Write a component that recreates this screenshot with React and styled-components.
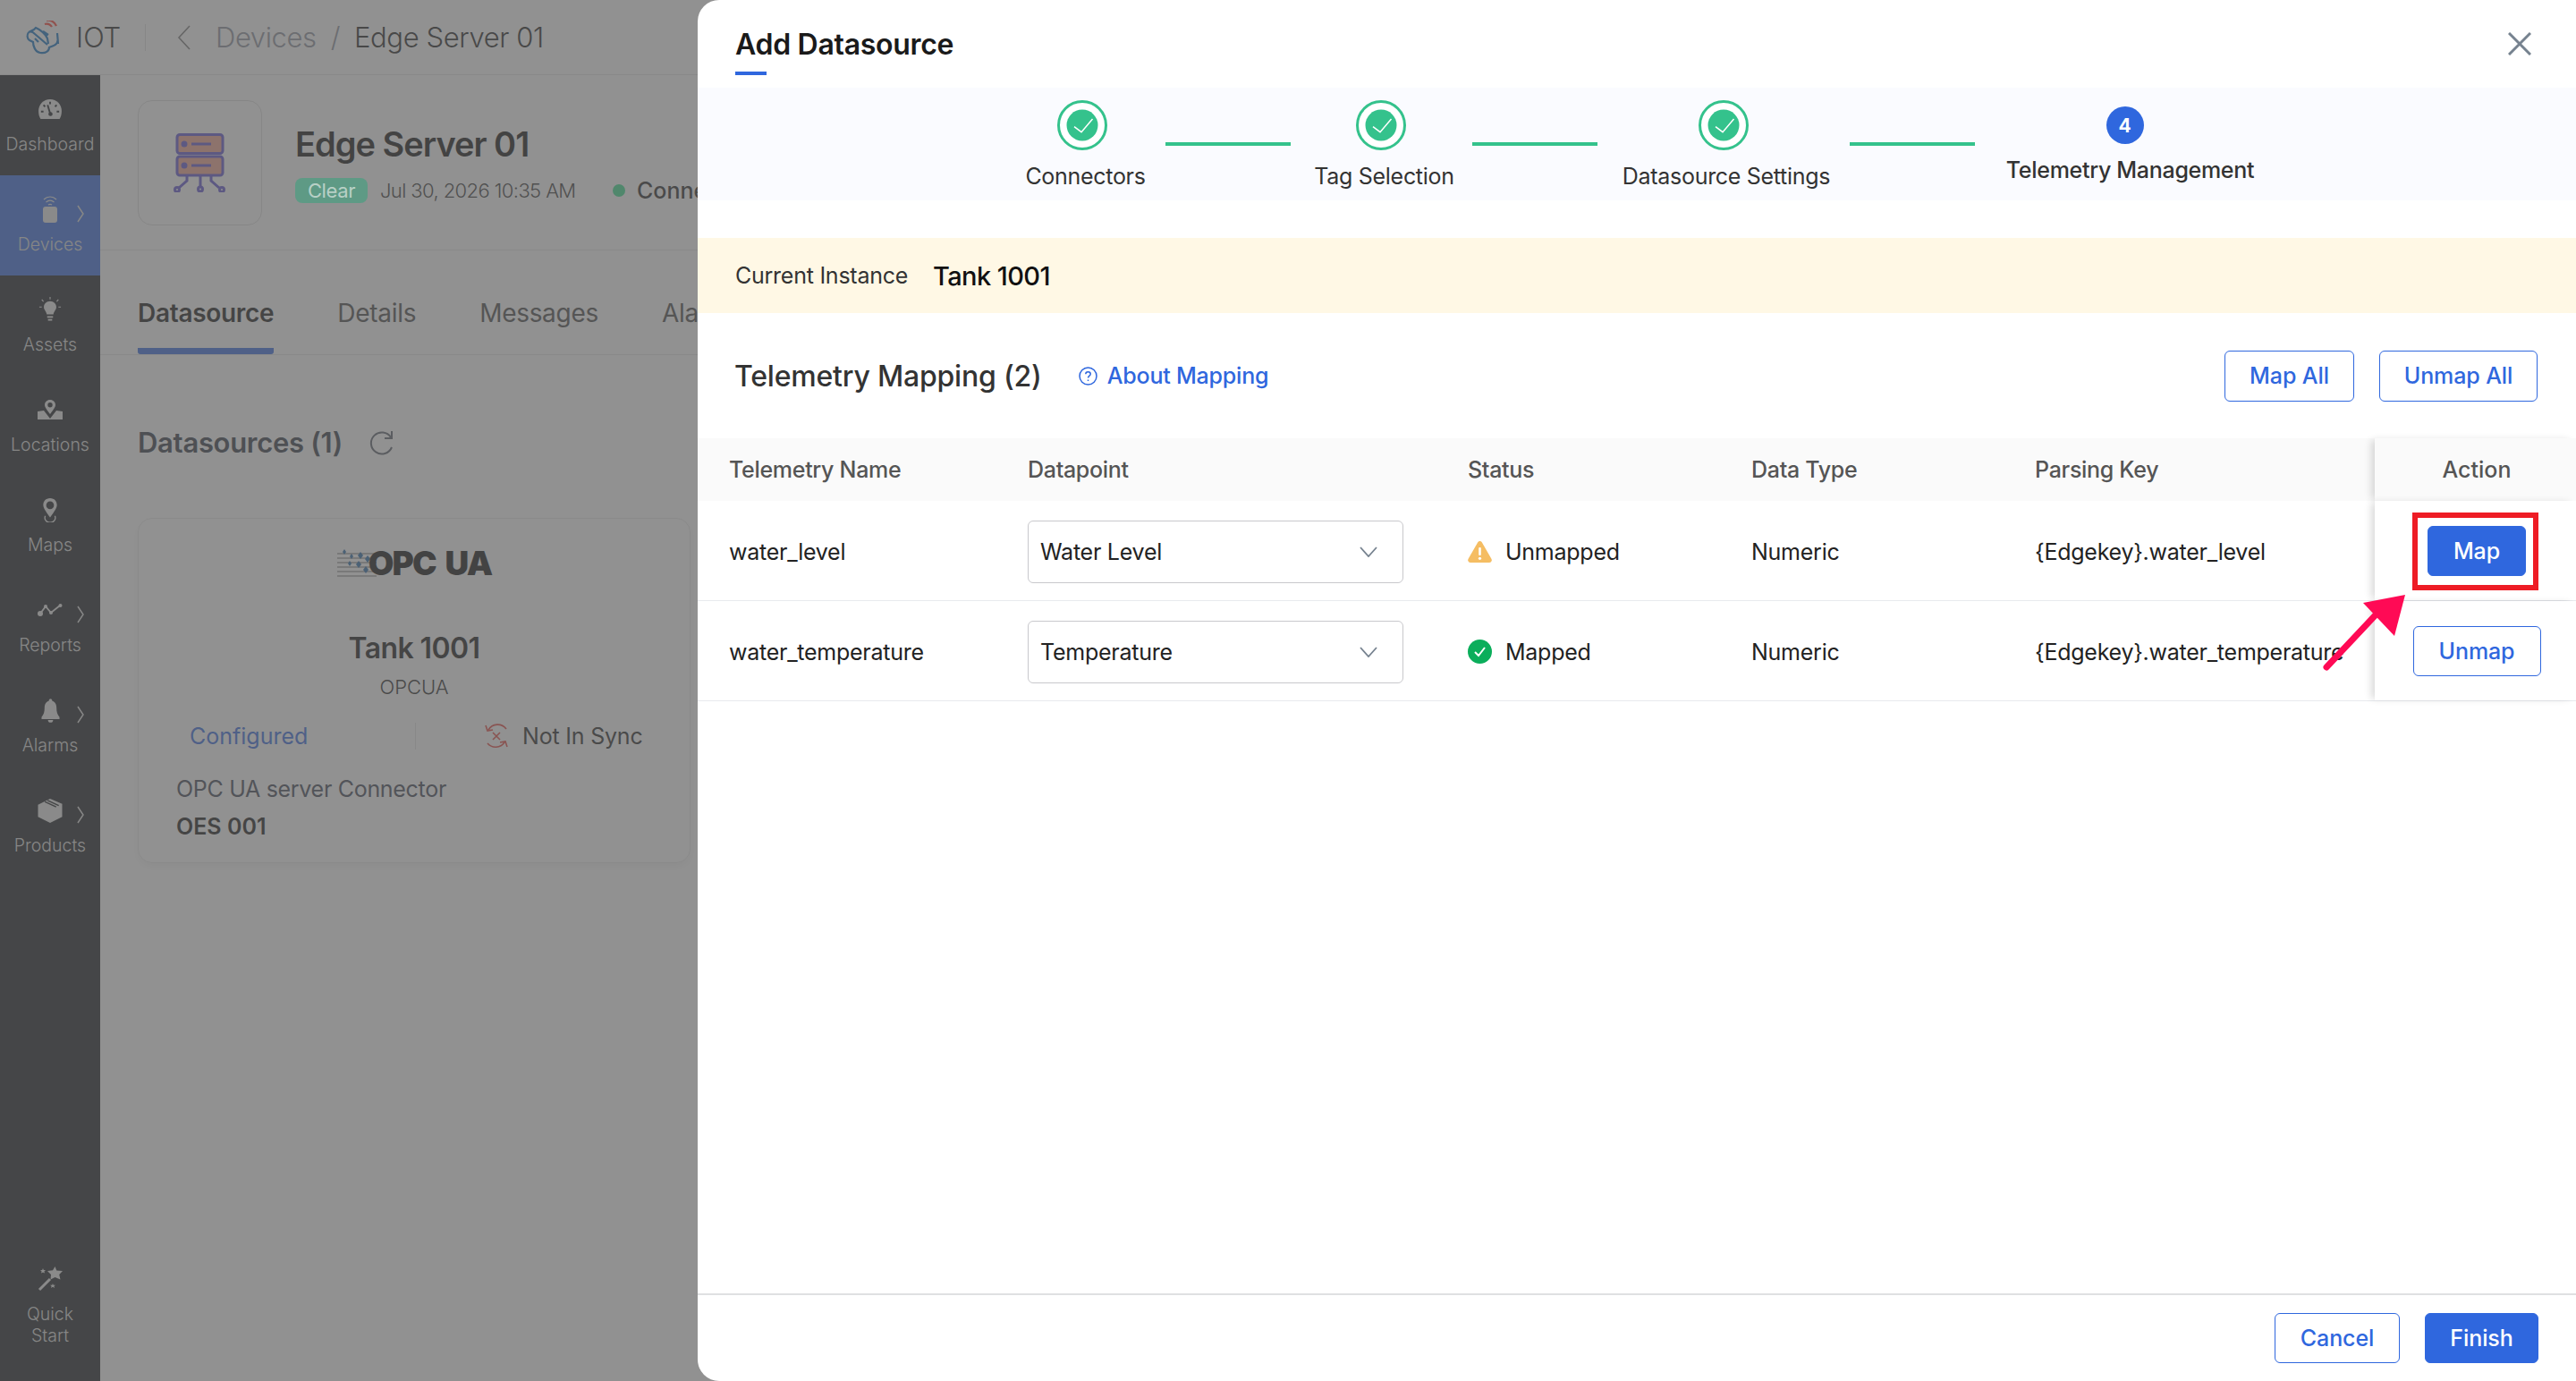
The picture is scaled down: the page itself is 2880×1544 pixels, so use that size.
import styled, { createGlobalStyle } from "styled-components";

const FONT = "Inter, 'Noto Sans', sans-serif";
const BLUE = "#2f67de";
const GREEN = "#34c28c";

const GlobalStyle = createGlobalStyle`
* {
  margin: 0;
  padding: 0;
  box-sizing: border-box;
  font-family: ${FONT};
}
html, body {
  width: 2880px;
  height: 1544px;
  overflow: hidden;
  background: #fff;
}
`;

const Shell = styled.div`
  position: relative;
  width: 2880px;
  height: 1544px;
  overflow: hidden;
  display: flex;
  flex-direction: column;
  background: #fff;
`;

const Backdrop = styled.div`
  position: absolute;
  inset: 0;
  background: rgba(94, 94, 94, 0.683);
`;

/* top bar */
const TopBar = styled.header`
  height: 84px;
  flex-shrink: 0;
  display: flex;
  align-items: center;
  padding-left: 28px;
  border-bottom: 1px solid #e6e6e6;
`;

const Product = styled.span`
  margin-left: 15px;
  width: 77px;
  font-size: 31px;
  font-weight: 300;
  color: #222;
`;

const BarDivider = styled.span`
  width: 1px;
  height: 30px;
  background: #ddd;
`;

const BackIcon = styled.svg`
  margin-left: 35px;
`;

const Crumb = styled.span`
  font-size: 31px;
  font-weight: 300;
  letter-spacing: -0.4px;
  color: ${({ $current }) => ($current ? "#1c1c1c" : "#8a8f9a")};
  margin: ${({ $margin }) => $margin || "0"};
`;

/* sidebar */
const Body = styled.div`
  flex: 1;
  display: flex;
  min-height: 0;
`;

const Sidebar = styled.nav`
  width: 112px;
  flex-shrink: 0;
  display: flex;
  flex-direction: column;
  background: #111519;
`;

const NavItem = styled.div`
  position: relative;
  height: 112px;
  flex-shrink: 0;
  display: flex;
  flex-direction: column;
  align-items: center;
  padding-top: 20px;
  background: ${({ $active }) => ($active ? BLUE : "transparent")};
`;

const NavIcon = styled.div`
  height: 36px;
  display: flex;
  align-items: center;
  justify-content: center;
`;

const NavChevron = styled.svg`
  position: absolute;
  left: 85px;
  top: 33px;
`;

const NavLabel = styled.span`
  margin-top: 9px;
  font-size: 19.5px;
  line-height: 24px;
  font-weight: 300;
  text-align: center;
  color: #dcdcdc;
`;

const QuickStart = styled(NavItem)`
  height: auto;
  margin-top: auto;
  padding-bottom: 39px;
`;

/* page behind the dialog */
const Content = styled.main`
  flex: 1;
  min-width: 0;
`;

const DeviceHead = styled.section`
  height: 196px;
  display: flex;
  gap: 37px;
  padding: 28px 0 0 42px;
  border-bottom: 1px solid #e6e6e6;
`;

const DeviceThumb = styled.div`
  width: 139px;
  height: 140px;
  display: flex;
  align-items: center;
  justify-content: center;
  border: 1px solid #dcdcdc;
  border-radius: 16px;
`;

const DeviceInfo = styled.div`
  display: flex;
  flex-direction: column;
`;

const DeviceTitle = styled.h1`
  margin-top: 25px;
  font-size: 38px;
  line-height: 48px;
  font-weight: 600;
  letter-spacing: -1px;
  color: #0c0c0c;
`;

const MetaRow = styled.div`
  margin-top: 14px;
  display: flex;
  align-items: center;
  height: 28px;
  white-space: nowrap;
`;

/* sits over the backdrop: its text is lighter than the dimmed page allows */
const ClearBadge = styled.span`
  position: relative;
  z-index: 1;
  width: 81px;
  height: 28px;
  border-radius: 8px;
  display: flex;
  align-items: center;
  justify-content: center;
  background: #5e9a85;
  color: #b8d0c6;
  font-size: 22px;
  letter-spacing: -0.4px;
`;

const MetaDate = styled.span`
  margin-left: 14px;
  width: 260px;
  font-size: 22px;
  font-weight: 300;
  letter-spacing: -0.6px;
  color: #333;
`;

const MetaDot = styled.span`
  width: 14px;
  height: 14px;
  border-radius: 50%;
  background: #34e08c;
`;

const MetaState = styled.span`
  margin-left: 13px;
  font-size: 25px;
  font-weight: 500;
  color: #222;
`;

const Tabs = styled.div`
  height: 117px;
  display: flex;
  align-items: flex-end;
  gap: 71px;
  padding-left: 42px;
  border-bottom: 1px solid #e6e6e6;
`;

const Tab = styled.span`
  padding-bottom: 22px;
  font-size: 28px;
  line-height: 34px;
  font-weight: ${({ $active }) => ($active ? 600 : 400)};
  letter-spacing: -0.3px;
  color: ${({ $active }) => ($active ? "#111" : "#444")};
  border-bottom: 7px solid ${({ $active }) => ($active ? BLUE : "transparent")};
  border-radius: 0 0 3px 3px;
`;

const Panel = styled.section`
  padding: 78px 0 0 42px;
`;

const PanelHead = styled.div`
  display: flex;
  align-items: center;
  gap: 30px;
`;

const PanelTitle = styled.h2`
  font-size: 31px;
  line-height: 40px;
  font-weight: 600;
  letter-spacing: -0.3px;
  color: #2d3340;
`;

const SourceCard = styled.article`
  margin-top: 64px;
  width: 618px;
  height: 386px;
  padding-top: 33px;
  display: flex;
  flex-direction: column;
  border: 1px solid #e8e8e8;
  border-radius: 16px;
  box-shadow: 0 4px 10px rgba(0, 0, 0, 0.06);
`;

const OpcLogo = styled.div`
  height: 33px;
  display: flex;
  align-items: center;
  justify-content: center;
`;

const OpcWord = styled.span`
  margin-left: -9px;
  font-size: 37px;
  line-height: 33px;
  font-weight: 900;
  letter-spacing: -1.8px;
  word-spacing: 5px;
  color: #0a0a0a;
`;

const SourceName = styled.h3`
  margin-top: 59px;
  text-align: center;
  font-size: 32px;
  line-height: 40px;
  font-weight: 600;
  letter-spacing: -0.6px;
  color: #111;
`;

const SourceType = styled.p`
  margin-top: 8px;
  text-align: center;
  font-size: 22px;
  line-height: 30px;
  font-weight: 300;
  color: #222;
`;

const SourceStates = styled.div`
  margin-top: 25px;
  display: grid;
  grid-template-columns: 309px 1fr;
  height: 30px;
  font-size: 25px;
  line-height: 30px;
`;

const StateConfigured = styled.span`
  padding-left: 57px;
  color: ${BLUE};
`;

const StateSync = styled.span`
  display: flex;
  align-items: center;
  gap: 15px;
  padding-left: 76px;
  letter-spacing: -0.2px;
  color: #222;
  border-left: 1px solid #e2e2e2;
`;

const SourceDesc = styled.p`
  margin-top: 29px;
  padding-left: 42px;
  font-size: 25px;
  line-height: 30px;
  letter-spacing: -0.3px;
  color: #3a4150;
`;

const SourceCode = styled.p`
  margin-top: 12px;
  padding-left: 42px;
  font-size: 25px;
  line-height: 30px;
  font-weight: 600;
  color: #111;
`;

/* dialog */
const Modal = styled.aside`
  position: absolute;
  top: 0;
  right: 0;
  bottom: 0;
  width: 2100px;
  display: flex;
  flex-direction: column;
  background: #fff;
  border-radius: 24px 0 0 24px;
  overflow: hidden;
`;

const ModalHead = styled.div`
  height: 98px;
  flex-shrink: 0;
  display: flex;
  justify-content: space-between;
  padding: 30px 50px 0 42px;
`;

const ModalTitle = styled.h2`
  font-size: 32px;
  line-height: 40px;
  font-weight: 600;
  letter-spacing: -0.3px;
  color: #1a1a1a;
`;

const TitleMark = styled.div`
  margin-top: 10px;
  width: 35px;
  height: 4px;
  background: ${BLUE};
`;

const CloseIcon = styled.svg`
  margin-top: 6px;
`;

const Stepper = styled.div`
  height: 126px;
  flex-shrink: 0;
  display: flex;
  padding-left: 366px;
  background: #fafbff;
`;

const Step = styled.div`
  width: ${({ $w }) => $w}px;
  display: flex;
  flex-direction: column;
  align-items: center;
  padding-top: ${({ $current }) => ($current ? "21px" : "14px")};
`;

const StepBadge = styled.div`
  margin-right: ${({ $current }) => ($current ? "12px" : "7px")};
  height: ${({ $current }) => ($current ? "42px" : "56px")};
`;

const StepNumber = styled.span`
  width: 42px;
  height: 42px;
  display: flex;
  align-items: center;
  justify-content: center;
  border-radius: 50%;
  background: ${BLUE};
  color: #fff;
  font-size: 21px;
  font-weight: 700;
`;

const StepLabel = styled.span`
  margin-top: 14px;
  font-size: 25px;
  line-height: 30px;
  font-weight: ${({ $current }) => ($current ? 500 : 400)};
  letter-spacing: -0.3px;
  color: #333;
  white-space: nowrap;
`;

const StepLine = styled.div`
  width: 140px;
  height: 4px;
  margin: 61px ${({ $last }) => ($last ? "35px" : "28px")} 0 22px;
  background: ${GREEN};
`;

const InstanceBar = styled.div`
  margin-top: 42px;
  height: 84px;
  flex-shrink: 0;
  display: flex;
  align-items: center;
  gap: 28px;
  padding-left: 42px;
  background: #fff8e5;
`;

const InstanceLabel = styled.span`
  font-size: 25px;
  letter-spacing: -0.25px;
  color: #333;
`;

const InstanceName = styled.span`
  font-size: 29px;
  font-weight: 500;
  letter-spacing: -0.6px;
  color: #111;
`;

const MappingHead = styled.div`
  height: 140px;
  flex-shrink: 0;
  display: flex;
  align-items: center;
  padding: 0 43px 0 41px;
`;

const MappingTitle = styled.h3`
  font-size: 32px;
  font-weight: 500;
  letter-spacing: -0.2px;
  color: #333;
`;

const AboutLink = styled.a`
  margin-left: 41px;
  display: flex;
  align-items: center;
  gap: 11px;
  font-size: 25px;
  font-weight: 500;
  letter-spacing: -0.2px;
  color: ${BLUE};
`;

const HeadActions = styled.div`
  margin-left: auto;
  display: flex;
  gap: 28px;
`;

const Button = styled.button`
  width: ${({ $w }) => $w}px;
  height: ${({ $h }) => $h || 56}px;
  border-radius: 6px;
  border: 1px solid ${BLUE};
  background: ${({ $primary }) => ($primary ? BLUE : "#fff")};
  color: ${({ $primary }) => ($primary ? "#fff" : BLUE)};
  font-size: 25px;
  font-weight: 500;
  letter-spacing: -0.1px;
  cursor: pointer;
`;

const Table = styled.div`
  flex: 1;
  min-height: 0;
`;

const Row = styled.div`
  display: grid;
  grid-template-columns: 334px 492px 317px 317px 415px 225px;
  height: ${({ $head }) => ($head ? "70px" : "112px")};
  background: ${({ $head }) => ($head ? "#fafafa" : "#fff")};
  border-bottom: ${({ $head }) => ($head ? "none" : "1px solid #e8eaee")};
`;

const Cell = styled.div`
  display: flex;
  align-items: center;
  gap: 15px;
  padding: ${({ $head }) => ($head ? "0" : "2px")} 0 0 35px;
  font-size: 25px;
  font-weight: ${({ $head }) => ($head ? 500 : 400)};
  letter-spacing: ${({ $head }) => ($head ? "-0.3px" : "-0.25px")};
  color: ${({ $head }) => ($head ? "#555" : "#222")};
  white-space: nowrap;
`;

const ActionCell = styled.div`
  display: flex;
  align-items: center;
  justify-content: center;
  font-size: 25px;
  font-weight: 500;
  color: #555;
  background: inherit;
  box-shadow: -6px 0 8px -2px rgba(0, 0, 0, 0.14);
  padding-left: 3px;
`;

const Select = styled.div`
  width: 420px;
  height: 70px;
  display: flex;
  align-items: center;
  justify-content: space-between;
  padding: 0 28px 0 13px;
  border: 1px solid #c8c8cc;
  border-radius: 6px;
  color: #222;
`;

const Highlight = styled.div`
  position: absolute;
  left: 1917px;
  top: 573px;
  width: 141px;
  height: 87px;
  border: 6px solid #ee1c25;
`;

const Arrow = styled.svg`
  position: absolute;
  left: 1815px;
  top: 660px;
`;

const Footer = styled.footer`
  height: 98px;
  flex-shrink: 0;
  display: flex;
  align-items: center;
  justify-content: flex-end;
  gap: 28px;
  padding-right: 42px;
  border-top: 2px solid #dfe0e2;
`;

/* drawings */
const Chevron = () => (
  <NavChevron width="10" height="20" viewBox="0 0 10 20" fill="none" stroke="#dcdcdc" strokeWidth="1.5">
    <path d="M2 1l6 9-6 9" />
  </NavChevron>
);

const ICON = "#e8e8e8";

const icons = {
  dashboard: (
    <svg width="28" height="24" viewBox="0 0 30 26">
      <path fill={ICON} d="M15 1C7 1 1 7.500 1 15c0 4 .8 7.500 2.500 10h23c1.700-2.500 2.500-6 2.500-10C29 7.500 23 1 15 1z" />
      <path stroke="#111519" strokeWidth="2" fill="none" d="M12 8l3 10M15 4v3M7 8l2 2M23 8l-2 2M4 16h3M23 16h3" />
      <circle cx="15.500" cy="19" r="2.500" fill="#111519" />
    </svg>
  ),
  devices: (
    <svg width="20" height="30" viewBox="0 0 20 30">
      <rect x="2" y="12" width="16" height="18" rx="3" fill={ICON} />
      <path fill="none" stroke={ICON} strokeWidth="1.200" d="M3 4c4-4 10-4 14 0M5.500 7c3-2.500 6-2.500 9 0M8 10c1.500-1 2.500-1 4 0" />
    </svg>
  ),
  assets: (
    <svg width="26" height="28" viewBox="0 0 28 30">
      <path fill={ICON} d="M14 5c-4.500 0-7.500 3.300-7.500 7 0 3.500 3 5 3.500 9h8c.5-4 3.500-5.500 3.500-9 0-3.700-3-7-7.500-7z" />
      <rect x="10.500" y="23" width="7" height="2" fill={ICON} />
      <rect x="11.500" y="26.500" width="5" height="2" fill={ICON} />
      <path stroke={ICON} strokeWidth="1.200" d="M14 0v3M4 3l2 2.500M24 3l-2 2.500M1 12h3M24 12h3" />
    </svg>
  ),
  locations: (
    <svg width="28" height="22" viewBox="0 0 28 22">
      <path fill={ICON} fillRule="evenodd" d="M14 0c-3.500 0-6 2.600-6 5.700 0 3 3.500 6.500 6 10.300 2.500-3.800 6-7.300 6-10.300C20 2.600 17.500 0 14 0zm0 3a2.700 2.700 0 110 5.400A2.700 2.700 0 0114 3z" />
      <path fill={ICON} d="M0 13l7-1 7 9 7-9 7 1v9H0z" />
    </svg>
  ),
  maps: (
    <svg width="18" height="27" viewBox="0 0 20 30">
      <path fill={ICON} fillRule="evenodd" d="M10 0C4.500 0 1.500 4 1.500 8.500 1.500 13 7 19 10 24c3-5 8.500-11 8.500-15.500C18.500 4 15.500 0 10 0zm0 4a4.800 4.800 0 110 9.600A4.800 4.800 0 0110 4z" />
      <path fill="none" stroke={ICON} strokeWidth="1.500" d="M4 22a6.500 6 0 1012 0" />
    </svg>
  ),
  reports: (
    <svg width="28" height="14" viewBox="0 0 28 14">
      <path fill="none" stroke={ICON} strokeWidth="1.800" d="M3 11L9 3l6 7L25 2" />
      <circle cx="3" cy="11" r="3" fill={ICON} />
      <circle cx="9" cy="3" r="2" fill={ICON} />
      <circle cx="15" cy="10" r="2" fill={ICON} />
      <circle cx="25.500" cy="2" r="2" fill={ICON} />
    </svg>
  ),
  alarms: (
    <svg width="21" height="27" viewBox="0 0 22 28">
      <path fill={ICON} d="M11 0c-1 0-1.800.8-1.800 1.800v.6C5.500 3.500 4 6.800 4 10.500c0 5-1 8-3.500 11V24h21v-2.500C19 18.500 18 15.500 18 10.500c0-3.700-1.500-7-5.200-8.100v-.6C12.800.8 12 0 11 0z" />
      <path fill={ICON} d="M8 25h6c0 2-1.300 3-3 3s-3-1-3-3z" />
    </svg>
  ),
  products: (
    <svg width="28" height="27" viewBox="0 0 28 28">
      <path fill={ICON} d="M14 0l14 6v15l-14 7-14-7V7z" />
      <path stroke="#111519" strokeWidth="1.500" fill="none" d="M8 3.500l13 6M11 2l13 6" />
    </svg>
  ),
  quick: (
    <svg width="28" height="28" viewBox="0 0 28 28">
      <path fill={ICON} d="M19.500 0l1.800 4.500L28 5l-3.800 4 1.300 5.500-6-2.600-5 2.600.5-5.500L11 5l6-.8z" />
      <path stroke={ICON} strokeWidth="3" d="M14 14L2 26" />
      <path fill={ICON} d="M6 2l.8 2H9L7.400 5.500 8 7.500 6 6.400 4 7.500l.6-2L3 4h2.200zM17 19l.7 1.700H20l-1.600 1.200.6 2-2-1.200-2 1.200.6-2-1.600-1.200h2.300z" />
    </svg>
  ),
};

const navItems = [
  { key: "dashboard", label: "Dashboard" },
  { key: "devices", label: "Devices", active: true, arrow: true },
  { key: "assets", label: "Assets" },
  { key: "locations", label: "Locations" },
  { key: "maps", label: "Maps" },
  { key: "reports", label: "Reports", arrow: true },
  { key: "alarms", label: "Alarms", arrow: true },
  { key: "products", label: "Products", arrow: true },
];

const Logo = () => (
  <svg width="42" height="38" viewBox="0 0 42 38" fill="none">
    <path stroke="#0f6fc0" strokeWidth="2.200" d="M4 13c-2 3-2 7 1 9l4 2c0 4 2 11 8 12 6 1 10-2 10-6l5-2c3-1 5-4 4-6M4 13c2-1 5 0 7 2l14 12M4 13l6-3 2-2c5 2 11 7 13 12l1 6M20 12l6 4M11 20l4 4M36 14l1 12" />
    <path stroke="#ff3a2e" strokeWidth="2.200" d="M22 4c3-1 6 0 8 3M24 0c4-1 9 1 11 6" />
  </svg>
);

const DeviceGlyph = () => (
  <svg width="60" height="66" viewBox="0 0 60 66" fill="none" stroke="#5b4fd0" strokeWidth="3">
    <rect x="4" y="1.500" width="51" height="21" rx="3" fill="#f2a08c" />
    <rect x="4" y="26" width="51" height="21" rx="3" fill="#f2a08c" />
    <circle cx="12" cy="12" r="2" fill="#5b4fd0" />
    <circle cx="12" cy="36" r="2" fill="#5b4fd0" />
    <path d="M20 12h22M20 36h22M15 47v6L6 61M30 47v13M42 47v6l9 8" />
    <circle cx="4" cy="63" r="2.500" />
    <circle cx="30" cy="62.500" r="2.500" />
    <circle cx="54" cy="63" r="2.500" />
  </svg>
);

const DoneMark = () => (
  <svg width="56" height="56" viewBox="0 0 56 56" fill="none">
    <circle cx="28" cy="28" r="26.500" fill="#fff" stroke={GREEN} strokeWidth="3" />
    <circle cx="28" cy="28" r="17.500" fill={GREEN} />
    <path d="M19 29.700l8 6L39.500 21" stroke="#fff" strokeWidth="1.500" />
  </svg>
);

const SelectChevron = () => (
  <svg width="20" height="12" viewBox="0 0 20 12" fill="none" stroke="#76828f" strokeWidth="1.800">
    <path d="M1 1l9 10 9-10" />
  </svg>
);

const WarnIcon = () => (
  <svg width="27" height="24" viewBox="0 0 27 24">
    <path fill="#f5bd63" d="M13.500 0c1 0 1.800.5 2.400 1.500l10.500 18.300c1 1.900-.2 4.200-2.400 4.200H3c-2.200 0-3.400-2.300-2.400-4.200L11.100 1.500C11.700.5 12.500 0 13.500 0z" />
    <rect x="12.200" y="7" width="2.600" height="9" rx="1" fill="#fff" />
    <circle cx="13.500" cy="19.300" r="1.600" fill="#fff" />
  </svg>
);

const OkIcon = () => (
  <svg width="27" height="27" viewBox="0 0 27 27">
    <circle cx="13.500" cy="13.500" r="13.500" fill="#0bae5b" />
    <path d="M8 14l4 4 7-9" fill="none" stroke="#fff" strokeWidth="2" />
  </svg>
);

const steps = [
  { label: "Connectors", width: 135 },
  { label: "Tag Selection", width: 153 },
  { label: "Datasource Settings", width: 232 },
];

const rows = [
  { name: "water_level", point: "Water Level", status: "Unmapped", key: "{Edgekey}.water_level", mapped: false },
  { name: "water_temperature", point: "Temperature", status: "Mapped", key: "{Edgekey}.water_temperature", mapped: true },
];

export default function App() {
  return (
    <Shell>
      <GlobalStyle />
      <TopBar>
        <Logo />
        <Product>IOT</Product>
        <BarDivider />
        <BackIcon width="16" height="28" viewBox="0 0 16 28" fill="none" stroke="#777" strokeWidth="1.600">
          <path d="M14 1L2 14l12 13" />
        </BackIcon>
        <Crumb $margin="0 0 0 27px">Devices</Crumb>
        <Crumb $margin="0 16px">/</Crumb>
        <Crumb $current>Edge Server 01</Crumb>
      </TopBar>

      <Body>
        <Sidebar>
          {navItems.map((item) => (
            <NavItem key={item.key} $active={item.active}>
              <NavIcon>{icons[item.key]}</NavIcon>
              {item.arrow && <Chevron />}
              <NavLabel>{item.label}</NavLabel>
            </NavItem>
          ))}
          <QuickStart>
            <NavIcon>{icons.quick}</NavIcon>
            <NavLabel>
              Quick
              <br />
              Start
            </NavLabel>
          </QuickStart>
        </Sidebar>

        <Content>
          <DeviceHead>
            <DeviceThumb>
              <DeviceGlyph />
            </DeviceThumb>
            <DeviceInfo>
              <DeviceTitle>Edge Server 01</DeviceTitle>
              <MetaRow>
                <ClearBadge>Clear</ClearBadge>
                <MetaDate>Jul 30, 2026 10:35 AM</MetaDate>
                <MetaDot />
                <MetaState>Connected</MetaState>
              </MetaRow>
            </DeviceInfo>
          </DeviceHead>

          <Tabs>
            <Tab $active>Datasource</Tab>
            <Tab>Details</Tab>
            <Tab>Messages</Tab>
            <Tab>Alarms</Tab>
          </Tabs>

          <Panel>
            <PanelHead>
              <PanelTitle>Datasources (1)</PanelTitle>
              <svg width="28" height="28" viewBox="0 0 28 28" fill="none" stroke="#555c68" strokeWidth="2">
                <path d="M24 8A12 12 0 1025 19M25 1v8h-8" />
              </svg>
            </PanelHead>
            <SourceCard>
              <OpcLogo>
                <svg width="44" height="33" viewBox="0 0 44 33" fill="none">
                  <path stroke="#666" strokeWidth="1" d="M0 6h44M0 11h44M0 16h44M0 21h44M0 26h44M0 31h44" />
                  <path fill="#2468a8" d="M8 1l2 3-2 3-2-3zM16 6l2 3-2 3-2-3zM26 4l3 4-3 4-3-4zM24 14l3 4-3 4-3-4zM34 8l3 4-3 4-3-4zM32 20l3 4-3 4-3-4zM14 14l2 3-2 3-2-3zM40 15l3 4-3 4-3-4z" />
                </svg>
                <OpcWord>OPC UA</OpcWord>
              </OpcLogo>
              <SourceName>Tank 1001</SourceName>
              <SourceType>OPCUA</SourceType>
              <SourceStates>
                <StateConfigured>Configured</StateConfigured>
                <StateSync>
                  <svg width="28" height="28" viewBox="0 0 28 28" fill="none" stroke="#e6403a" strokeWidth="1.600">
                    <path d="M5 7a12 12 0 0120-1M23 21a12 12 0 01-19 1M2 2l2 6 6-1M26 26l-2-6-6 1M10 10l8 8M18 10l-8 8" />
                  </svg>
                  Not In Sync
                </StateSync>
              </SourceStates>
              <SourceDesc>OPC UA server Connector</SourceDesc>
              <SourceCode>OES 001</SourceCode>
            </SourceCard>
          </Panel>
        </Content>
      </Body>

      <Backdrop />

      <Modal>
        <ModalHead>
          <div>
            <ModalTitle>Add Datasource</ModalTitle>
            <TitleMark />
          </div>
          <CloseIcon width="26" height="26" viewBox="0 0 26 26" fill="none" stroke="#76828f" strokeWidth="3">
            <path d="M1 1l24 24M25 1L1 25" />
          </CloseIcon>
        </ModalHead>

        <Stepper>
          {steps.map((step, i) => [
            <Step key={step.label} $w={step.width}>
              <StepBadge>
                <DoneMark />
              </StepBadge>
              <StepLabel>{step.label}</StepLabel>
            </Step>,
            <StepLine key={`${step.label}-line`} $last={i === steps.length - 1} />,
          ])}
          <Step $current $w={277}>
            <StepBadge $current>
              <StepNumber>4</StepNumber>
            </StepBadge>
            <StepLabel $current>Telemetry Management</StepLabel>
          </Step>
        </Stepper>

        <InstanceBar>
          <InstanceLabel>Current Instance</InstanceLabel>
          <InstanceName>Tank 1001</InstanceName>
        </InstanceBar>

        <MappingHead>
          <MappingTitle>Telemetry Mapping (2)</MappingTitle>
          <AboutLink>
            <svg width="21" height="21" viewBox="0 0 21 21" fill="none" stroke={BLUE} strokeWidth="1.500">
              <circle cx="10.500" cy="10.500" r="9.500" />
              <path d="M7.800 8.200c0-3.400 5.400-3.400 5.400 0 0 2-2.700 2-2.700 4.300M10.500 14.500v1.500" />
            </svg>
            About Mapping
          </AboutLink>
          <HeadActions>
            <Button $w={145} $h={57}>Map All</Button>
            <Button $w={177} $h={57}>Unmap All</Button>
          </HeadActions>
        </MappingHead>

        <Table>
          <Row $head>
            <Cell $head>Telemetry Name</Cell>
            <Cell $head>Datapoint</Cell>
            <Cell $head>Status</Cell>
            <Cell $head>Data Type</Cell>
            <Cell $head>Parsing Key</Cell>
            <ActionCell>Action</ActionCell>
          </Row>
          {rows.map((row) => (
            <Row key={row.name}>
              <Cell>{row.name}</Cell>
              <Cell>
                <Select>
                  {row.point}
                  <SelectChevron />
                </Select>
              </Cell>
              <Cell>
                {row.mapped ? <OkIcon /> : <WarnIcon />}
                {row.status}
              </Cell>
              <Cell>Numeric</Cell>
              <Cell>{row.key}</Cell>
              <ActionCell>
                {row.mapped ? (
                  <Button $w={143}>Unmap</Button>
                ) : (
                  <Button $primary $w={110}>Map</Button>
                )}
              </ActionCell>
            </Row>
          ))}
        </Table>

        <Footer>
          <Button $w={140}>Cancel</Button>
          <Button $primary $w={127}>Finish</Button>
        </Footer>

        <Highlight />
        <Arrow width="100" height="90" viewBox="0 0 100 90">
          <path d="M6 86L68 20" stroke="#ff0a55" strokeWidth="7" strokeLinecap="round" />
          <path d="M94 5L47 14l35 37z" fill="#ff0a55" />
        </Arrow>
      </Modal>
    </Shell>
  );
}
